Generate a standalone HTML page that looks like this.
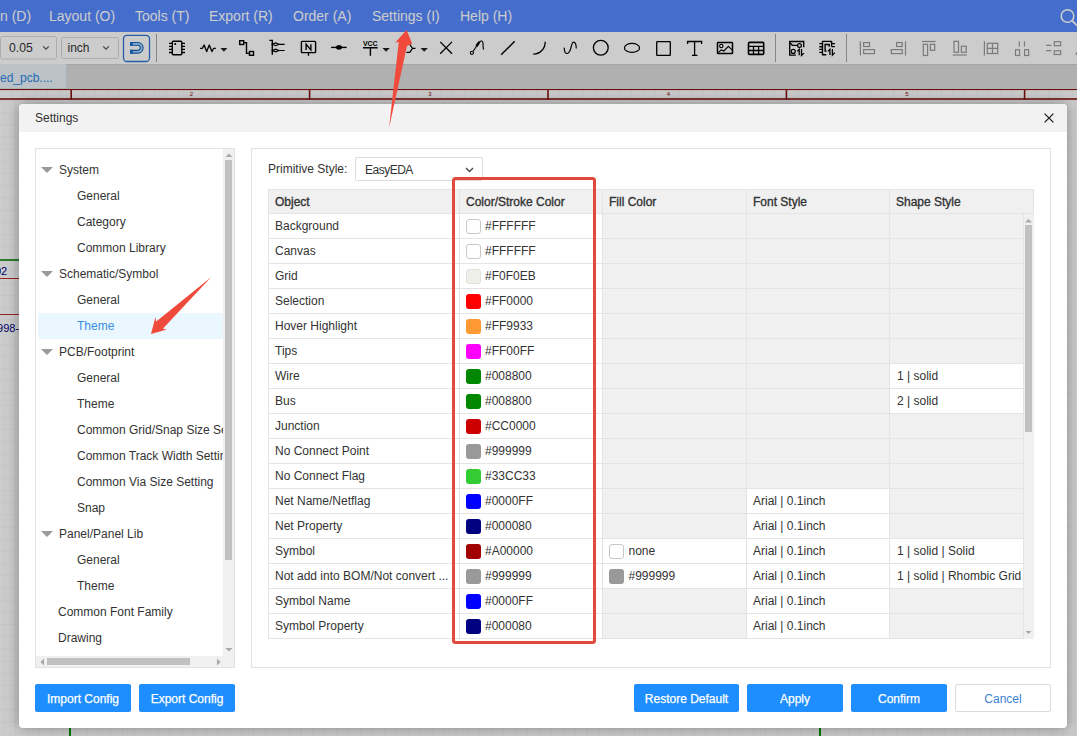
<!DOCTYPE html><html><head><meta charset="utf-8"><style>
*{box-sizing:border-box;margin:0;padding:0}
html,body{width:1077px;height:736px;overflow:hidden;position:relative;font-family:"Liberation Sans",sans-serif;background:#fff}
.a{position:absolute}
#menu{left:0;top:0;width:1077px;height:32px;background:#5689ff}
#menu span{position:absolute;top:0;line-height:32px;font-size:14px;color:#fff;white-space:nowrap}
#tool{left:0;top:32px;width:1077px;height:32px;background:#fff}
#tabs{left:0;top:64px;width:1077px;height:25px;background:#dcdcdc;border-top:1px solid #cfcfcf}
#ruler{left:0;top:88px;width:1077px;height:12px;background:#fdfdfd}
#canvas{left:0;top:100px;width:1077px;height:636px;background-color:#fff;
 background-image:linear-gradient(to right, rgba(0,0,0,0.022) 1px, transparent 1px),linear-gradient(to bottom, rgba(0,0,0,0.022) 1px, transparent 1px);
 background-size:11.92px 12.2px;background-position:3px 0}
#overlay{left:0;top:0;width:1077px;height:736px;background:rgba(0,0,0,0.2)}
#dlg{left:19px;top:104px;width:1048px;height:624px;background:#fff;border-radius:4px;overflow:hidden;box-shadow:0 0 14px rgba(0,0,0,0.35)}
#dhead{left:0;top:0;width:1048px;height:28px;background:#f2f2f2}
#dtitle{left:16px;top:0;line-height:28px;font-size:12px;color:#333}
.btn{position:absolute;top:580px;height:28px;background:#1e8eff;color:#fff;font-size:12px;text-align:center;line-height:28px;padding-top:0.5px;border-radius:2px;-webkit-text-stroke:0.25px #fff}
#tree{left:16px;top:44px;width:200px;height:520px;border:1px solid #e3e3e3;overflow:hidden}
.ti{position:absolute;left:0;height:26px;line-height:26px;font-size:12px;color:#333;white-space:nowrap;width:186px}
.tri{position:absolute;left:5px;top:10px;width:0;height:0;border-left:6.2px solid transparent;border-right:6.2px solid transparent;border-top:6.5px solid #9a9a9a}
#panel{left:232px;top:44px;width:800px;height:520px;border:1px solid #e3e3e3}
.cell{position:absolute;height:25px;line-height:24px;font-size:12px;color:#333;white-space:nowrap;overflow:hidden;border-bottom:1px solid #e4e4e4;border-right:1px solid #e4e4e4;padding-left:7px}
.sw{display:inline-block;width:15px;height:15px;border-radius:3px;vertical-align:top;margin-top:4.5px;margin-right:4px;margin-left:-1px}
.hd{font-weight:normal;-webkit-text-stroke:0.35px #333}
</style></head><body>
<div id="canvas" class="a"></div>
<div class="a" style="left:0;top:259px;width:19px;height:1.5px;background:#3a9a3a"></div>
<div class="a" style="left:0;top:277.5px;width:19px;height:1.5px;background:#c03030"></div>
<div class="a" style="left:0;top:313.5px;width:19px;height:1.5px;background:#c03030"></div>
<div class="a" style="left:-5px;top:263px;font-size:11px;line-height:16px;color:#000080">02</div>
<div class="a" style="left:-9px;top:320px;font-size:11px;line-height:16px;color:#000080">1998-</div>
<div class="a" style="left:69px;top:728px;width:1.5px;height:8px;background:#009900"></div>
<div class="a" style="left:819px;top:728px;width:1.5px;height:8px;background:#009900"></div>
<div id="ruler" class="a"></div>
<svg class="a" style="left:0;top:88px" width="1077" height="12"><line x1="-0.32" y1="2" x2="-0.32" y2="10" stroke="#f5f5f5" stroke-width="1"/><line x1="11.60" y1="2" x2="11.60" y2="10" stroke="#f5f5f5" stroke-width="1"/><line x1="23.52" y1="2" x2="23.52" y2="10" stroke="#f5f5f5" stroke-width="1"/><line x1="35.44" y1="2" x2="35.44" y2="10" stroke="#f5f5f5" stroke-width="1"/><line x1="47.36" y1="2" x2="47.36" y2="10" stroke="#f5f5f5" stroke-width="1"/><line x1="59.28" y1="2" x2="59.28" y2="10" stroke="#f5f5f5" stroke-width="1"/><line x1="71.20" y1="2" x2="71.20" y2="10" stroke="#f5f5f5" stroke-width="1"/><line x1="83.12" y1="2" x2="83.12" y2="10" stroke="#f5f5f5" stroke-width="1"/><line x1="95.04" y1="2" x2="95.04" y2="10" stroke="#f5f5f5" stroke-width="1"/><line x1="106.96" y1="2" x2="106.96" y2="10" stroke="#f5f5f5" stroke-width="1"/><line x1="118.88" y1="2" x2="118.88" y2="10" stroke="#f5f5f5" stroke-width="1"/><line x1="130.80" y1="2" x2="130.80" y2="10" stroke="#f5f5f5" stroke-width="1"/><line x1="142.72" y1="2" x2="142.72" y2="10" stroke="#f5f5f5" stroke-width="1"/><line x1="154.64" y1="2" x2="154.64" y2="10" stroke="#f5f5f5" stroke-width="1"/><line x1="166.56" y1="2" x2="166.56" y2="10" stroke="#f5f5f5" stroke-width="1"/><line x1="178.48" y1="2" x2="178.48" y2="10" stroke="#f5f5f5" stroke-width="1"/><line x1="190.40" y1="2" x2="190.40" y2="10" stroke="#f5f5f5" stroke-width="1"/><line x1="202.32" y1="2" x2="202.32" y2="10" stroke="#f5f5f5" stroke-width="1"/><line x1="214.24" y1="2" x2="214.24" y2="10" stroke="#f5f5f5" stroke-width="1"/><line x1="226.16" y1="2" x2="226.16" y2="10" stroke="#f5f5f5" stroke-width="1"/><line x1="238.08" y1="2" x2="238.08" y2="10" stroke="#f5f5f5" stroke-width="1"/><line x1="250.00" y1="2" x2="250.00" y2="10" stroke="#f5f5f5" stroke-width="1"/><line x1="261.92" y1="2" x2="261.92" y2="10" stroke="#f5f5f5" stroke-width="1"/><line x1="273.84" y1="2" x2="273.84" y2="10" stroke="#f5f5f5" stroke-width="1"/><line x1="285.76" y1="2" x2="285.76" y2="10" stroke="#f5f5f5" stroke-width="1"/><line x1="297.68" y1="2" x2="297.68" y2="10" stroke="#f5f5f5" stroke-width="1"/><line x1="309.60" y1="2" x2="309.60" y2="10" stroke="#f5f5f5" stroke-width="1"/><line x1="321.52" y1="2" x2="321.52" y2="10" stroke="#f5f5f5" stroke-width="1"/><line x1="333.44" y1="2" x2="333.44" y2="10" stroke="#f5f5f5" stroke-width="1"/><line x1="345.36" y1="2" x2="345.36" y2="10" stroke="#f5f5f5" stroke-width="1"/><line x1="357.28" y1="2" x2="357.28" y2="10" stroke="#f5f5f5" stroke-width="1"/><line x1="369.20" y1="2" x2="369.20" y2="10" stroke="#f5f5f5" stroke-width="1"/><line x1="381.12" y1="2" x2="381.12" y2="10" stroke="#f5f5f5" stroke-width="1"/><line x1="393.04" y1="2" x2="393.04" y2="10" stroke="#f5f5f5" stroke-width="1"/><line x1="404.96" y1="2" x2="404.96" y2="10" stroke="#f5f5f5" stroke-width="1"/><line x1="416.88" y1="2" x2="416.88" y2="10" stroke="#f5f5f5" stroke-width="1"/><line x1="428.80" y1="2" x2="428.80" y2="10" stroke="#f5f5f5" stroke-width="1"/><line x1="440.72" y1="2" x2="440.72" y2="10" stroke="#f5f5f5" stroke-width="1"/><line x1="452.64" y1="2" x2="452.64" y2="10" stroke="#f5f5f5" stroke-width="1"/><line x1="464.56" y1="2" x2="464.56" y2="10" stroke="#f5f5f5" stroke-width="1"/><line x1="476.48" y1="2" x2="476.48" y2="10" stroke="#f5f5f5" stroke-width="1"/><line x1="488.40" y1="2" x2="488.40" y2="10" stroke="#f5f5f5" stroke-width="1"/><line x1="500.32" y1="2" x2="500.32" y2="10" stroke="#f5f5f5" stroke-width="1"/><line x1="512.24" y1="2" x2="512.24" y2="10" stroke="#f5f5f5" stroke-width="1"/><line x1="524.16" y1="2" x2="524.16" y2="10" stroke="#f5f5f5" stroke-width="1"/><line x1="536.08" y1="2" x2="536.08" y2="10" stroke="#f5f5f5" stroke-width="1"/><line x1="548.00" y1="2" x2="548.00" y2="10" stroke="#f5f5f5" stroke-width="1"/><line x1="559.92" y1="2" x2="559.92" y2="10" stroke="#f5f5f5" stroke-width="1"/><line x1="571.84" y1="2" x2="571.84" y2="10" stroke="#f5f5f5" stroke-width="1"/><line x1="583.76" y1="2" x2="583.76" y2="10" stroke="#f5f5f5" stroke-width="1"/><line x1="595.68" y1="2" x2="595.68" y2="10" stroke="#f5f5f5" stroke-width="1"/><line x1="607.60" y1="2" x2="607.60" y2="10" stroke="#f5f5f5" stroke-width="1"/><line x1="619.52" y1="2" x2="619.52" y2="10" stroke="#f5f5f5" stroke-width="1"/><line x1="631.44" y1="2" x2="631.44" y2="10" stroke="#f5f5f5" stroke-width="1"/><line x1="643.36" y1="2" x2="643.36" y2="10" stroke="#f5f5f5" stroke-width="1"/><line x1="655.28" y1="2" x2="655.28" y2="10" stroke="#f5f5f5" stroke-width="1"/><line x1="667.20" y1="2" x2="667.20" y2="10" stroke="#f5f5f5" stroke-width="1"/><line x1="679.12" y1="2" x2="679.12" y2="10" stroke="#f5f5f5" stroke-width="1"/><line x1="691.04" y1="2" x2="691.04" y2="10" stroke="#f5f5f5" stroke-width="1"/><line x1="702.96" y1="2" x2="702.96" y2="10" stroke="#f5f5f5" stroke-width="1"/><line x1="714.88" y1="2" x2="714.88" y2="10" stroke="#f5f5f5" stroke-width="1"/><line x1="726.80" y1="2" x2="726.80" y2="10" stroke="#f5f5f5" stroke-width="1"/><line x1="738.72" y1="2" x2="738.72" y2="10" stroke="#f5f5f5" stroke-width="1"/><line x1="750.64" y1="2" x2="750.64" y2="10" stroke="#f5f5f5" stroke-width="1"/><line x1="762.56" y1="2" x2="762.56" y2="10" stroke="#f5f5f5" stroke-width="1"/><line x1="774.48" y1="2" x2="774.48" y2="10" stroke="#f5f5f5" stroke-width="1"/><line x1="786.40" y1="2" x2="786.40" y2="10" stroke="#f5f5f5" stroke-width="1"/><line x1="798.32" y1="2" x2="798.32" y2="10" stroke="#f5f5f5" stroke-width="1"/><line x1="810.24" y1="2" x2="810.24" y2="10" stroke="#f5f5f5" stroke-width="1"/><line x1="822.16" y1="2" x2="822.16" y2="10" stroke="#f5f5f5" stroke-width="1"/><line x1="834.08" y1="2" x2="834.08" y2="10" stroke="#f5f5f5" stroke-width="1"/><line x1="846.00" y1="2" x2="846.00" y2="10" stroke="#f5f5f5" stroke-width="1"/><line x1="857.92" y1="2" x2="857.92" y2="10" stroke="#f5f5f5" stroke-width="1"/><line x1="869.84" y1="2" x2="869.84" y2="10" stroke="#f5f5f5" stroke-width="1"/><line x1="881.76" y1="2" x2="881.76" y2="10" stroke="#f5f5f5" stroke-width="1"/><line x1="893.68" y1="2" x2="893.68" y2="10" stroke="#f5f5f5" stroke-width="1"/><line x1="905.60" y1="2" x2="905.60" y2="10" stroke="#f5f5f5" stroke-width="1"/><line x1="917.52" y1="2" x2="917.52" y2="10" stroke="#f5f5f5" stroke-width="1"/><line x1="929.44" y1="2" x2="929.44" y2="10" stroke="#f5f5f5" stroke-width="1"/><line x1="941.36" y1="2" x2="941.36" y2="10" stroke="#f5f5f5" stroke-width="1"/><line x1="953.28" y1="2" x2="953.28" y2="10" stroke="#f5f5f5" stroke-width="1"/><line x1="965.20" y1="2" x2="965.20" y2="10" stroke="#f5f5f5" stroke-width="1"/><line x1="977.12" y1="2" x2="977.12" y2="10" stroke="#f5f5f5" stroke-width="1"/><line x1="989.04" y1="2" x2="989.04" y2="10" stroke="#f5f5f5" stroke-width="1"/><line x1="1000.96" y1="2" x2="1000.96" y2="10" stroke="#f5f5f5" stroke-width="1"/><line x1="1012.88" y1="2" x2="1012.88" y2="10" stroke="#f5f5f5" stroke-width="1"/><line x1="1024.80" y1="2" x2="1024.80" y2="10" stroke="#f5f5f5" stroke-width="1"/><line x1="1036.72" y1="2" x2="1036.72" y2="10" stroke="#f5f5f5" stroke-width="1"/><line x1="1048.64" y1="2" x2="1048.64" y2="10" stroke="#f5f5f5" stroke-width="1"/><line x1="1060.56" y1="2" x2="1060.56" y2="10" stroke="#f5f5f5" stroke-width="1"/><line x1="1072.48" y1="2" x2="1072.48" y2="10" stroke="#f5f5f5" stroke-width="1"/><rect x="0" y="0.5" width="1077" height="1.6" fill="#8a1414"/><rect x="0" y="10.2" width="1077" height="1.6" fill="#8a1414"/><rect x="70.4" y="0.5" width="1.6" height="11.3" fill="#8a1414"/><rect x="308.8" y="0.5" width="1.6" height="11.3" fill="#8a1414"/><rect x="547.2" y="0.5" width="1.6" height="11.3" fill="#8a1414"/><rect x="785.6" y="0.5" width="1.6" height="11.3" fill="#8a1414"/><rect x="1023.8" y="0.5" width="1.6" height="11.3" fill="#8a1414"/><text x="191.5" y="8.3" font-size="6" fill="#8a1414" text-anchor="middle" font-family="Liberation Sans">2</text><text x="430.0" y="8.3" font-size="6" fill="#8a1414" text-anchor="middle" font-family="Liberation Sans">3</text><text x="668.4" y="8.3" font-size="6" fill="#8a1414" text-anchor="middle" font-family="Liberation Sans">4</text><text x="906.8" y="8.3" font-size="6" fill="#8a1414" text-anchor="middle" font-family="Liberation Sans">5</text></svg>
<div id="tabs" class="a"></div>
<div class="a" style="left:0;top:64px;width:66px;height:24px;background:#e9f3fa"></div>
<div class="a" style="left:0;top:64px;height:24px;line-height:24px;font-size:12px;color:#2f86e0;white-space:nowrap;padding-top:2px">ed_pcb....</div>
<div id="tool" class="a"></div>
<svg class="a" style="left:0;top:32px" width="1077" height="32" viewBox="0 32 1077 32" font-family="Liberation Sans">
<!-- selects -->
<rect x="0.5" y="36.5" width="56" height="22.5" rx="2" fill="#fff" stroke="#d9d9d9"/>
<text x="9" y="52.2" font-size="12.2" fill="#333">0.05</text>
<path d="M43.2 46.3L46 49.1L48.8 46.3" fill="none" stroke="#555" stroke-width="1.2"/>
<rect x="61.5" y="37.5" width="57" height="21" rx="2" fill="#fff" stroke="#d9d9d9"/>
<text x="67.5" y="52" font-size="12" fill="#333">inch</text>
<path d="M103.2 46.3L106 49.1L108.8 46.3" fill="none" stroke="#555" stroke-width="1.2"/>
<!-- magnet button -->
<rect x="123.5" y="35.3" width="26" height="26.2" rx="3.5" fill="#fff" stroke="#2f74cc" stroke-width="1.3"/>
<path d="M130 43.9H138A3.93 3.93 0 0 1 138 51.75H130" fill="none" stroke="#1a5fb8" stroke-width="3.9"/>
<path d="M132.6 43.9H138A3.93 3.93 0 0 1 138 51.75H132.6" fill="none" stroke="#a8dcff" stroke-width="1.7"/>
<rect x="130" y="42" width="2.7" height="3.8" fill="#1a6fd8"/>
<rect x="130" y="49.85" width="2.7" height="3.8" fill="#1a6fd8"/>
<line x1="156.5" y1="34" x2="156.5" y2="62" stroke="#a8a8a8" stroke-width="1"/>
<g fill="none" stroke="#000" stroke-width="1.4">
<!-- IC -->
<rect x="172.3" y="41.2" width="9.5" height="13.5" rx="1"/><rect x="174.3" y="43.1" width="1.8" height="1.8" fill="#000" stroke="none"/>
<path d="M169 43.4H172.3M169 46.4H172.3M169 49.4H172.3M169 52.5H172.3M181.8 43.4H185M181.8 46.4H185M181.8 49.4H185M181.8 52.5H185"/>
<!-- resistor -->
<path d="M200.1 48.3H202.4L204.1 45L206.7 51.6L209.3 45L211.9 51.6L213.7 48.3H215.8" stroke-width="1.3" stroke-linejoin="round"/>
<!-- wire -->
<rect x="239.7" y="40.7" width="4" height="3.8"/>
<path d="M243.7 42.6H246.5V53.4H249.5"/>
<rect x="249.5" y="51.5" width="4" height="3.8"/>
<!-- bus entry -->
<path d="M269.4 40.4H272.3V54.8"/>
<path d="M272.3 44.3L275.6 42.9L279 44.3L275.6 45.7Z M279 44.3H284.7 M272.3 50.5L275.6 49.1L279 50.5L275.6 51.9Z M279 50.5H284.7" stroke-width="1.2"/>
<!-- net label -->
<rect x="301.4" y="41.4" width="14.2" height="11.2" rx="0.8"/>
<path d="M308.5 52.6V55.8"/>
<!-- junction line -->
<path d="M331.1 47.4H346.7"/>
<!-- VCC -->
<path d="M363 47.7H377.7M370.4 47.7V55.7" stroke-width="1.4"/>
<!-- port -->
<path d="M406.4 44.4H409.8L412.5 48.4L409.8 52.4H406.4M412.5 48.4H415.5" stroke-width="1.2"/>
<!-- X -->
<path d="M440.2 41.9L452 53.8M452 41.9L440.2 53.8" stroke-width="1.3"/>
<!-- probe -->
<circle cx="471.9" cy="52.8" r="1.6" stroke-width="1.1"/>
<path d="M473.2 51.3L477.5 44.8" stroke-width="1.1"/>
<path d="M476.4 46.3L479.4 41.9" stroke-width="2.4"/>
<path d="M479.4 42.2C480.6 40.4 482.6 40.8 482.9 42.5C483.2 44.2 482.7 47.4 483.6 49.5" stroke-width="1.1"/>
<!-- line -->
<path d="M501.1 54.7L514.7 41.3" stroke-width="1.4"/>
<!-- arc -->
<path d="M533.2 54.2A12 12 0 0 0 545.2 41.8" stroke-width="1.3"/>
<!-- bezier -->
<path d="M564.3 47.6C564 52 565.6 53.6 567.1 53.5C569.5 53.3 570.5 50 571.3 46.4C572 43.3 572.6 42.2 573.6 42.2C575 42.2 576.2 44.5 576.3 48.4" stroke-width="1.2"/>
<!-- circle -->
<circle cx="600.8" cy="47.8" r="7.4" stroke-width="1.3"/>
<!-- ellipse -->
<ellipse cx="632" cy="47.9" rx="7.6" ry="4.5" stroke-width="1.2"/>
<!-- rect -->
<rect x="656.7" y="41.7" width="13.6" height="13.6" rx="0.6" stroke-width="1.3"/>
<!-- image -->
<rect x="717.5" y="42.4" width="15" height="11.1" rx="0.6" stroke-width="1.5"/>
<circle cx="721.3" cy="46" r="1.7" stroke-width="1.1"/>
<path d="M718.4 52.7L721.2 49.9L723.9 51L728.4 46.3L732.3 50.2" stroke-width="1.1"/>
<!-- table -->
<rect x="748.5" y="42.4" width="15.2" height="12" rx="1" stroke-width="1.6"/>
<path d="M748.5 46.4H763.7M748.5 50.5H763.7M753.5 46.4V54.4M758.6 46.4V54.4" stroke-width="1.3"/>
</g>
<!-- N letter -->
<path d="M306.1 50V44.2L310.9 50V44.2" fill="none" stroke="#000" stroke-width="1.35" stroke-linejoin="miter"/>
<!-- junction dot -->
<path d="M335.3 47.4Q337 45.1 339 45.1Q341 45.1 342.7 47.4Q341 49.7 339 49.7Q337 49.7 335.3 47.4Z" fill="#000"/>
<!-- VCC text -->
<text x="370.3" y="45.5" font-size="7" font-weight="bold" text-anchor="middle" fill="#000" letter-spacing="-0.1">VCC</text>
<!-- dropdown triangles -->
<path d="M220.4 48H227.4L223.9 51.8Z M382.4 48H389.8L386.1 51.7Z M420.5 48H427.9L424.2 51.7Z" fill="#222"/>
<!-- T -->
<path d="M687.6 44V41.5H701.6V44 M694.6 41.5V55.4 M692 55.4H697.4" fill="none" stroke="#000" stroke-width="1.3"/>
<line x1="775.5" y1="34" x2="775.5" y2="62" stroke="#a8a8a8" stroke-width="1"/>
<!-- symbol update -->
<g fill="none" stroke="#000" stroke-width="1.35" stroke-linecap="butt">
<path d="M795.9 55.1H789.7V41.5H803.7V47.3"/>
<path d="M789.9 42.8L792.3 45.3H797.6"/>
<circle cx="799.5" cy="45.5" r="1.9" stroke-width="1.25"/>
<circle cx="793.2" cy="51.4" r="2" stroke-width="1.25"/>
<path d="M797.2 51.4L799.2 49.4V55.3M801.5 48.9V55.4L803.9 53.1" stroke-width="1.3"/>
<!-- IC update -->
<path d="M826.3 54.7H822.5V41.4H831.6V46.7" stroke-linejoin="round"/>
<path d="M829.2 46.7V44.5H825.1V51.1H826.6"/>
<path d="M819.3 43.6H822.5M819.3 46.7H822.5M819.3 49.4H822.5M819.3 52.3H822.5M831.6 43.6H834.9M831.6 46.6H834.9"/>
<path d="M827.9 51.4L829.9 49.4V55.1M832.4 48.9V55.1L834.8 52.6" stroke-width="1.3"/>
</g>
<line x1="846.5" y1="34" x2="846.5" y2="62" stroke="#a8a8a8" stroke-width="1"/>
<g fill="none" stroke="#9a9a9a" stroke-width="1.2">
<!-- align left -->
<path d="M860.4 41.3V55.6"/>
<rect x="863.6" y="42.6" width="5.9" height="3.9"/>
<rect x="863.6" y="49.6" width="10.9" height="4"/>
<!-- align right -->
<path d="M905.5 41.3V55.6"/>
<rect x="896.6" y="42.6" width="5.6" height="3.9"/>
<rect x="891.3" y="49.6" width="10.9" height="4"/>
<!-- align top -->
<path d="M922 41.5H935.7"/>
<rect x="923.3" y="44.3" width="4.3" height="11.2"/>
<rect x="930.4" y="44.3" width="4.3" height="6"/>
<!-- align bottom -->
<rect x="954" y="41.3" width="4.5" height="11"/>
<rect x="961.4" y="46.2" width="4.8" height="6.1"/>
<path d="M952.9 55H966.8"/>
<!-- grid -->
<path d="M984.4 41.2V55.5"/>
<rect x="987.3" y="43.3" width="10.4" height="10.2"/>
<path d="M992.5 43.3V53.5M987.3 48.3H997.7"/>
<!-- distribute h -->
<path d="M1019.3 41.2V46.5M1024.5 41.2V46.5"/>
<rect x="1015.5" y="49.7" width="4" height="5.8"/>
<rect x="1024.6" y="49.7" width="4" height="5.8"/>
<!-- distribute v -->
<path d="M1046.2 45.3H1051.4M1046.2 50.6H1051.4"/>
<rect x="1054.3" y="41.7" width="6.4" height="3.9"/>
<rect x="1054.3" y="50.8" width="6.4" height="3.7"/>
<path d="M1076 55L1078 50"/>
</g>
</svg>

<div id="menu" class="a">
<span style="left:0px">n (D)</span>
<span style="left:49px">Layout (O)</span>
<span style="left:135px">Tools (T)</span>
<span style="left:209px">Export (R)</span>
<span style="left:293px">Order (A)</span>
<span style="left:372px">Settings (I)</span>
<span style="left:460px">Help (H)</span>
<svg class="a" style="left:1058px;top:7px" width="19" height="20"><circle cx="9.5" cy="9" r="6.3" fill="none" stroke="#fff" stroke-width="1.6"/><line x1="14" y1="13.5" x2="19" y2="18.5" stroke="#fff" stroke-width="1.8"/></svg>
</div>
<div id="overlay" class="a"></div>
<div id="dlg" class="a">
<div id="dhead" class="a"><div id="dtitle" class="a">Settings</div></div>
<svg class="a" style="left:1025px;top:9px" width="10" height="10"><path d="M0.6 0.6L9.4 9.4M9.4 0.6L0.6 9.4" stroke="#222" stroke-width="1.3"/></svg>
<div id="tree" class="a">
<div class="ti" style="top:8px;"><div class="tri"></div><span style="position:absolute;left:23px;">System</span></div>
<div class="ti" style="top:34px;"><span style="position:absolute;left:41px;">General</span></div>
<div class="ti" style="top:60px;"><span style="position:absolute;left:41px;">Category</span></div>
<div class="ti" style="top:86px;"><span style="position:absolute;left:41px;">Common Library</span></div>
<div class="ti" style="top:112px;"><div class="tri"></div><span style="position:absolute;left:23px;">Schematic/Symbol</span></div>
<div class="ti" style="top:138px;"><span style="position:absolute;left:41px;">General</span></div>
<div class="ti" style="top:164px;background:#eaf7fe;left:2px;"><span style="position:absolute;left:39px;color:#3b8fe0;">Theme</span></div>
<div class="ti" style="top:190px;"><div class="tri"></div><span style="position:absolute;left:23px;">PCB/Footprint</span></div>
<div class="ti" style="top:216px;"><span style="position:absolute;left:41px;">General</span></div>
<div class="ti" style="top:242px;"><span style="position:absolute;left:41px;">Theme</span></div>
<div class="ti" style="top:268px;"><span style="position:absolute;left:41px;">Common Grid/Snap Size Setting</span></div>
<div class="ti" style="top:294px;"><span style="position:absolute;left:41px;">Common Track Width Setting</span></div>
<div class="ti" style="top:320px;"><span style="position:absolute;left:41px;">Common Via Size Setting</span></div>
<div class="ti" style="top:346px;"><span style="position:absolute;left:41px;">Snap</span></div>
<div class="ti" style="top:372px;"><div class="tri"></div><span style="position:absolute;left:23px;">Panel/Panel Lib</span></div>
<div class="ti" style="top:398px;"><span style="position:absolute;left:41px;">General</span></div>
<div class="ti" style="top:424px;"><span style="position:absolute;left:41px;">Theme</span></div>
<div class="ti" style="top:450px;"><span style="position:absolute;left:22px;">Common Font Family</span></div>
<div class="ti" style="top:476px;"><span style="position:absolute;left:22px;">Drawing</span></div>
<div class="a" style="left:187px;top:0;width:12px;height:507px;background:#f0f0f0"></div>
<div class="a" style="left:189px;top:11px;width:7px;height:400px;background:#c1c1c1"></div>
<svg class="a" style="left:188px;top:3px" width="10" height="6"><path d="M1.5 5L5 1.5L8.5 5Z" fill="#a8a8a8"/></svg>
<svg class="a" style="left:188px;top:498px" width="10" height="6"><path d="M1.5 1L5 4.5L8.5 1Z" fill="#a8a8a8"/></svg>
<div class="a" style="left:0;top:507px;width:199px;height:12px;background:#f0f0f0"></div>
<div class="a" style="left:11px;top:509px;width:143px;height:7px;background:#c1c1c1"></div>
<svg class="a" style="left:3px;top:507px" width="6" height="12"><path d="M5 2.5L1.5 6L5 9.5Z" fill="#a8a8a8"/></svg>
<svg class="a" style="left:180px;top:507px" width="6" height="12"><path d="M1 2.5L4.5 6L1 9.5Z" fill="#a8a8a8"/></svg>
</div>
<div id="panel" class="a"></div>
<div class="a" style="left:249px;top:53px;line-height:24px;font-size:12px;color:#333">Primitive Style:</div>
<div class="a" style="left:336px;top:53px;width:128px;height:24px;border:1px solid #dcdcdc;border-radius:2px;background:#fff"></div>
<div class="a" style="left:346px;top:53.5px;line-height:24px;font-size:12px;color:#333;letter-spacing:-0.5px">EasyEDA</div>
<svg class="a" style="left:446px;top:63px" width="9" height="6"><path d="M1 1L4.5 4.5L8 1" fill="none" stroke="#444" stroke-width="1.3"/></svg>
<div class="a" style="left:249px;top:85px;width:766px;height:450px;background:#f0f0f0"></div>
<div class="cell hd" style="left:249px;top:85px;width:192px;background:#f0f0f0;border-top:1px solid #e4e4e4;border-left:1px solid #e4e4e4;padding-left:6px;">Object</div>
<div class="cell hd" style="left:441px;top:85px;width:143px;background:#f0f0f0;border-top:1px solid #e4e4e4;padding-left:6px;">Color/Stroke Color</div>
<div class="cell hd" style="left:584px;top:85px;width:144px;background:#f0f0f0;border-top:1px solid #e4e4e4;padding-left:6px;">Fill Color</div>
<div class="cell hd" style="left:728px;top:85px;width:143px;background:#f0f0f0;border-top:1px solid #e4e4e4;padding-left:6px;">Font Style</div>
<div class="cell hd" style="left:871px;top:85px;width:144px;background:#f0f0f0;border-top:1px solid #e4e4e4;padding-left:6px;">Shape Style</div>
<div class="cell" style="left:249px;top:110px;height:25px;line-height:24px;width:192px;background:#fff;border-left:1px solid #e4e4e4;padding-left:6px">Background</div>
<div class="cell" style="left:441px;top:110px;height:25px;width:143px;background:#fff"><span class="sw" style="background:#fff;border:1px solid #c8c8c8"></span>#FFFFFF</div>
<div class="cell" style="left:584px;top:110px;height:25px;width:144px;background:#f0f0f0"></div>
<div class="cell" style="left:728px;top:110px;height:25px;width:143px;background:#f0f0f0"></div>
<div class="cell" style="left:871px;top:110px;height:25px;width:134px;background:#f0f0f0"></div>
<div class="cell" style="left:249px;top:135px;height:25px;line-height:24px;width:192px;background:#fff;border-left:1px solid #e4e4e4;padding-left:6px">Canvas</div>
<div class="cell" style="left:441px;top:135px;height:25px;width:143px;background:#fff"><span class="sw" style="background:#fff;border:1px solid #c8c8c8"></span>#FFFFFF</div>
<div class="cell" style="left:584px;top:135px;height:25px;width:144px;background:#f0f0f0"></div>
<div class="cell" style="left:728px;top:135px;height:25px;width:143px;background:#f0f0f0"></div>
<div class="cell" style="left:871px;top:135px;height:25px;width:134px;background:#f0f0f0"></div>
<div class="cell" style="left:249px;top:160px;height:25px;line-height:24px;width:192px;background:#fff;border-left:1px solid #e4e4e4;padding-left:6px">Grid</div>
<div class="cell" style="left:441px;top:160px;height:25px;width:143px;background:#fff"><span class="sw" style="background:#f0f0eb;border:1px solid #e0e0dc"></span>#F0F0EB</div>
<div class="cell" style="left:584px;top:160px;height:25px;width:144px;background:#f0f0f0"></div>
<div class="cell" style="left:728px;top:160px;height:25px;width:143px;background:#f0f0f0"></div>
<div class="cell" style="left:871px;top:160px;height:25px;width:134px;background:#f0f0f0"></div>
<div class="cell" style="left:249px;top:185px;height:25px;line-height:24px;width:192px;background:#fff;border-left:1px solid #e4e4e4;padding-left:6px">Selection</div>
<div class="cell" style="left:441px;top:185px;height:25px;width:143px;background:#fff"><span class="sw" style="background:#FF0000"></span>#FF0000</div>
<div class="cell" style="left:584px;top:185px;height:25px;width:144px;background:#f0f0f0"></div>
<div class="cell" style="left:728px;top:185px;height:25px;width:143px;background:#f0f0f0"></div>
<div class="cell" style="left:871px;top:185px;height:25px;width:134px;background:#f0f0f0"></div>
<div class="cell" style="left:249px;top:210px;height:25px;line-height:24px;width:192px;background:#fff;border-left:1px solid #e4e4e4;padding-left:6px">Hover Highlight</div>
<div class="cell" style="left:441px;top:210px;height:25px;width:143px;background:#fff"><span class="sw" style="background:#FF9933"></span>#FF9933</div>
<div class="cell" style="left:584px;top:210px;height:25px;width:144px;background:#f0f0f0"></div>
<div class="cell" style="left:728px;top:210px;height:25px;width:143px;background:#f0f0f0"></div>
<div class="cell" style="left:871px;top:210px;height:25px;width:134px;background:#f0f0f0"></div>
<div class="cell" style="left:249px;top:235px;height:25px;line-height:24px;width:192px;background:#fff;border-left:1px solid #e4e4e4;padding-left:6px">Tips</div>
<div class="cell" style="left:441px;top:235px;height:25px;width:143px;background:#fff"><span class="sw" style="background:#FF00FF"></span>#FF00FF</div>
<div class="cell" style="left:584px;top:235px;height:25px;width:144px;background:#f0f0f0"></div>
<div class="cell" style="left:728px;top:235px;height:25px;width:143px;background:#f0f0f0"></div>
<div class="cell" style="left:871px;top:235px;height:25px;width:134px;background:#f0f0f0"></div>
<div class="cell" style="left:249px;top:260px;height:25px;line-height:24px;width:192px;background:#fff;border-left:1px solid #e4e4e4;padding-left:6px">Wire</div>
<div class="cell" style="left:441px;top:260px;height:25px;width:143px;background:#fff"><span class="sw" style="background:#008800"></span>#008800</div>
<div class="cell" style="left:584px;top:260px;height:25px;width:144px;background:#f0f0f0"></div>
<div class="cell" style="left:728px;top:260px;height:25px;width:143px;background:#f0f0f0"></div>
<div class="cell" style="left:871px;top:260px;height:25px;width:134px;background:#fff;padding-left:7px">1 | solid</div>
<div class="cell" style="left:249px;top:285px;height:25px;line-height:24px;width:192px;background:#fff;border-left:1px solid #e4e4e4;padding-left:6px">Bus</div>
<div class="cell" style="left:441px;top:285px;height:25px;width:143px;background:#fff"><span class="sw" style="background:#008800"></span>#008800</div>
<div class="cell" style="left:584px;top:285px;height:25px;width:144px;background:#f0f0f0"></div>
<div class="cell" style="left:728px;top:285px;height:25px;width:143px;background:#f0f0f0"></div>
<div class="cell" style="left:871px;top:285px;height:25px;width:134px;background:#fff;padding-left:7px">2 | solid</div>
<div class="cell" style="left:249px;top:310px;height:25px;line-height:24px;width:192px;background:#fff;border-left:1px solid #e4e4e4;padding-left:6px">Junction</div>
<div class="cell" style="left:441px;top:310px;height:25px;width:143px;background:#fff"><span class="sw" style="background:#CC0000"></span>#CC0000</div>
<div class="cell" style="left:584px;top:310px;height:25px;width:144px;background:#f0f0f0"></div>
<div class="cell" style="left:728px;top:310px;height:25px;width:143px;background:#f0f0f0"></div>
<div class="cell" style="left:871px;top:310px;height:25px;width:134px;background:#f0f0f0"></div>
<div class="cell" style="left:249px;top:335px;height:25px;line-height:24px;width:192px;background:#fff;border-left:1px solid #e4e4e4;padding-left:6px">No Connect Point</div>
<div class="cell" style="left:441px;top:335px;height:25px;width:143px;background:#fff"><span class="sw" style="background:#999999"></span>#999999</div>
<div class="cell" style="left:584px;top:335px;height:25px;width:144px;background:#f0f0f0"></div>
<div class="cell" style="left:728px;top:335px;height:25px;width:143px;background:#f0f0f0"></div>
<div class="cell" style="left:871px;top:335px;height:25px;width:134px;background:#f0f0f0"></div>
<div class="cell" style="left:249px;top:360px;height:25px;line-height:24px;width:192px;background:#fff;border-left:1px solid #e4e4e4;padding-left:6px">No Connect Flag</div>
<div class="cell" style="left:441px;top:360px;height:25px;width:143px;background:#fff"><span class="sw" style="background:#33CC33"></span>#33CC33</div>
<div class="cell" style="left:584px;top:360px;height:25px;width:144px;background:#f0f0f0"></div>
<div class="cell" style="left:728px;top:360px;height:25px;width:143px;background:#f0f0f0"></div>
<div class="cell" style="left:871px;top:360px;height:25px;width:134px;background:#f0f0f0"></div>
<div class="cell" style="left:249px;top:385px;height:25px;line-height:24px;width:192px;background:#fff;border-left:1px solid #e4e4e4;padding-left:6px">Net Name/Netflag</div>
<div class="cell" style="left:441px;top:385px;height:25px;width:143px;background:#fff"><span class="sw" style="background:#0000FF"></span>#0000FF</div>
<div class="cell" style="left:584px;top:385px;height:25px;width:144px;background:#f0f0f0"></div>
<div class="cell" style="left:728px;top:385px;height:25px;width:143px;background:#fff;padding-left:6px">Arial | 0.1inch</div>
<div class="cell" style="left:871px;top:385px;height:25px;width:134px;background:#f0f0f0"></div>
<div class="cell" style="left:249px;top:410px;height:25px;line-height:24px;width:192px;background:#fff;border-left:1px solid #e4e4e4;padding-left:6px">Net Property</div>
<div class="cell" style="left:441px;top:410px;height:25px;width:143px;background:#fff"><span class="sw" style="background:#000080"></span>#000080</div>
<div class="cell" style="left:584px;top:410px;height:25px;width:144px;background:#f0f0f0"></div>
<div class="cell" style="left:728px;top:410px;height:25px;width:143px;background:#fff;padding-left:6px">Arial | 0.1inch</div>
<div class="cell" style="left:871px;top:410px;height:25px;width:134px;background:#f0f0f0"></div>
<div class="cell" style="left:249px;top:435px;height:25px;line-height:24px;width:192px;background:#fff;border-left:1px solid #e4e4e4;padding-left:6px">Symbol</div>
<div class="cell" style="left:441px;top:435px;height:25px;width:143px;background:#fff"><span class="sw" style="background:#A00000"></span>#A00000</div>
<div class="cell" style="left:584px;top:435px;height:25px;width:144px;background:#fff"><span class="sw" style="margin-right:4.5px;background:#fff;border:1px solid #c8c8c8"></span>none</div>
<div class="cell" style="left:728px;top:435px;height:25px;width:143px;background:#fff;padding-left:6px">Arial | 0.1inch</div>
<div class="cell" style="left:871px;top:435px;height:25px;width:134px;background:#fff;padding-left:7px">1 | solid | Solid</div>
<div class="cell" style="left:249px;top:460px;height:25px;line-height:24px;width:192px;background:#fff;border-left:1px solid #e4e4e4;padding-left:6px">Not add into BOM/Not convert ...</div>
<div class="cell" style="left:441px;top:460px;height:25px;width:143px;background:#fff"><span class="sw" style="background:#999999"></span>#999999</div>
<div class="cell" style="left:584px;top:460px;height:25px;width:144px;background:#fff"><span class="sw" style="margin-right:4.5px;background:#999999"></span>#999999</div>
<div class="cell" style="left:728px;top:460px;height:25px;width:143px;background:#fff;padding-left:6px">Arial | 0.1inch</div>
<div class="cell" style="left:871px;top:460px;height:25px;width:134px;background:#fff;padding-left:7px">1 | solid | Rhombic Grid</div>
<div class="cell" style="left:249px;top:485px;height:25px;line-height:24px;width:192px;background:#fff;border-left:1px solid #e4e4e4;padding-left:6px">Symbol Name</div>
<div class="cell" style="left:441px;top:485px;height:25px;width:143px;background:#fff"><span class="sw" style="background:#0000FF"></span>#0000FF</div>
<div class="cell" style="left:584px;top:485px;height:25px;width:144px;background:#f0f0f0"></div>
<div class="cell" style="left:728px;top:485px;height:25px;width:143px;background:#fff;padding-left:6px">Arial | 0.1inch</div>
<div class="cell" style="left:871px;top:485px;height:25px;width:134px;background:#f0f0f0"></div>
<div class="cell" style="left:249px;top:510px;height:25px;line-height:24px;width:192px;background:#fff;border-left:1px solid #e4e4e4;padding-left:6px">Symbol Property</div>
<div class="cell" style="left:441px;top:510px;height:25px;width:143px;background:#fff"><span class="sw" style="background:#000080"></span>#000080</div>
<div class="cell" style="left:584px;top:510px;height:25px;width:144px;background:#f0f0f0"></div>
<div class="cell" style="left:728px;top:510px;height:25px;width:143px;background:#fff;padding-left:6px">Arial | 0.1inch</div>
<div class="cell" style="left:871px;top:510px;height:25px;width:134px;background:#f0f0f0"></div>
<div class="a" style="left:1005px;top:110px;width:9px;height:425px;background:#f0f0f0"></div>
<div class="a" style="left:1006px;top:121px;width:7px;height:207px;background:#c1c1c1"></div>
<svg class="a" style="left:1005px;top:114px" width="9" height="5"><path d="M1 4.5L4.5 1L8 4.5Z" fill="#a8a8a8"/></svg>
<svg class="a" style="left:1005px;top:526px" width="9" height="5"><path d="M1.5 1L4.5 4L7.5 1Z" fill="#a8a8a8"/></svg>
<div class="a" style="left:433px;top:73px;width:144px;height:467px;border:3px solid #e2483c;border-radius:3.5px"></div>
<div class="btn" style="left:16px;width:96px">Import Config</div>
<div class="btn" style="left:120px;width:96px">Export Config</div>
<div class="btn" style="left:615px;width:105px">Restore Default</div>
<div class="btn" style="left:728px;width:96px">Apply</div>
<div class="btn" style="left:832px;width:96px">Confirm</div>
<div class="btn" style="left:936px;width:96px;background:#fff;border:1px solid #dcdcdc;color:#3a82d4;line-height:26px;padding-top:0.5px;-webkit-text-stroke:0">Cancel</div>
</div>
<svg class="a" style="left:0;top:0" width="1077" height="736"><path d="M389 128L398.75 42L395.3 42.4L406.6 30L412.2 43.8L407 46Z" fill="#ef4a3c"/><path d="M211.3 276.9L156.3 321.5L155.4 317.2L151 333.9L166.9 329.4L162.8 328.8Z" fill="#ef4a3c"/></svg>
</body></html>
